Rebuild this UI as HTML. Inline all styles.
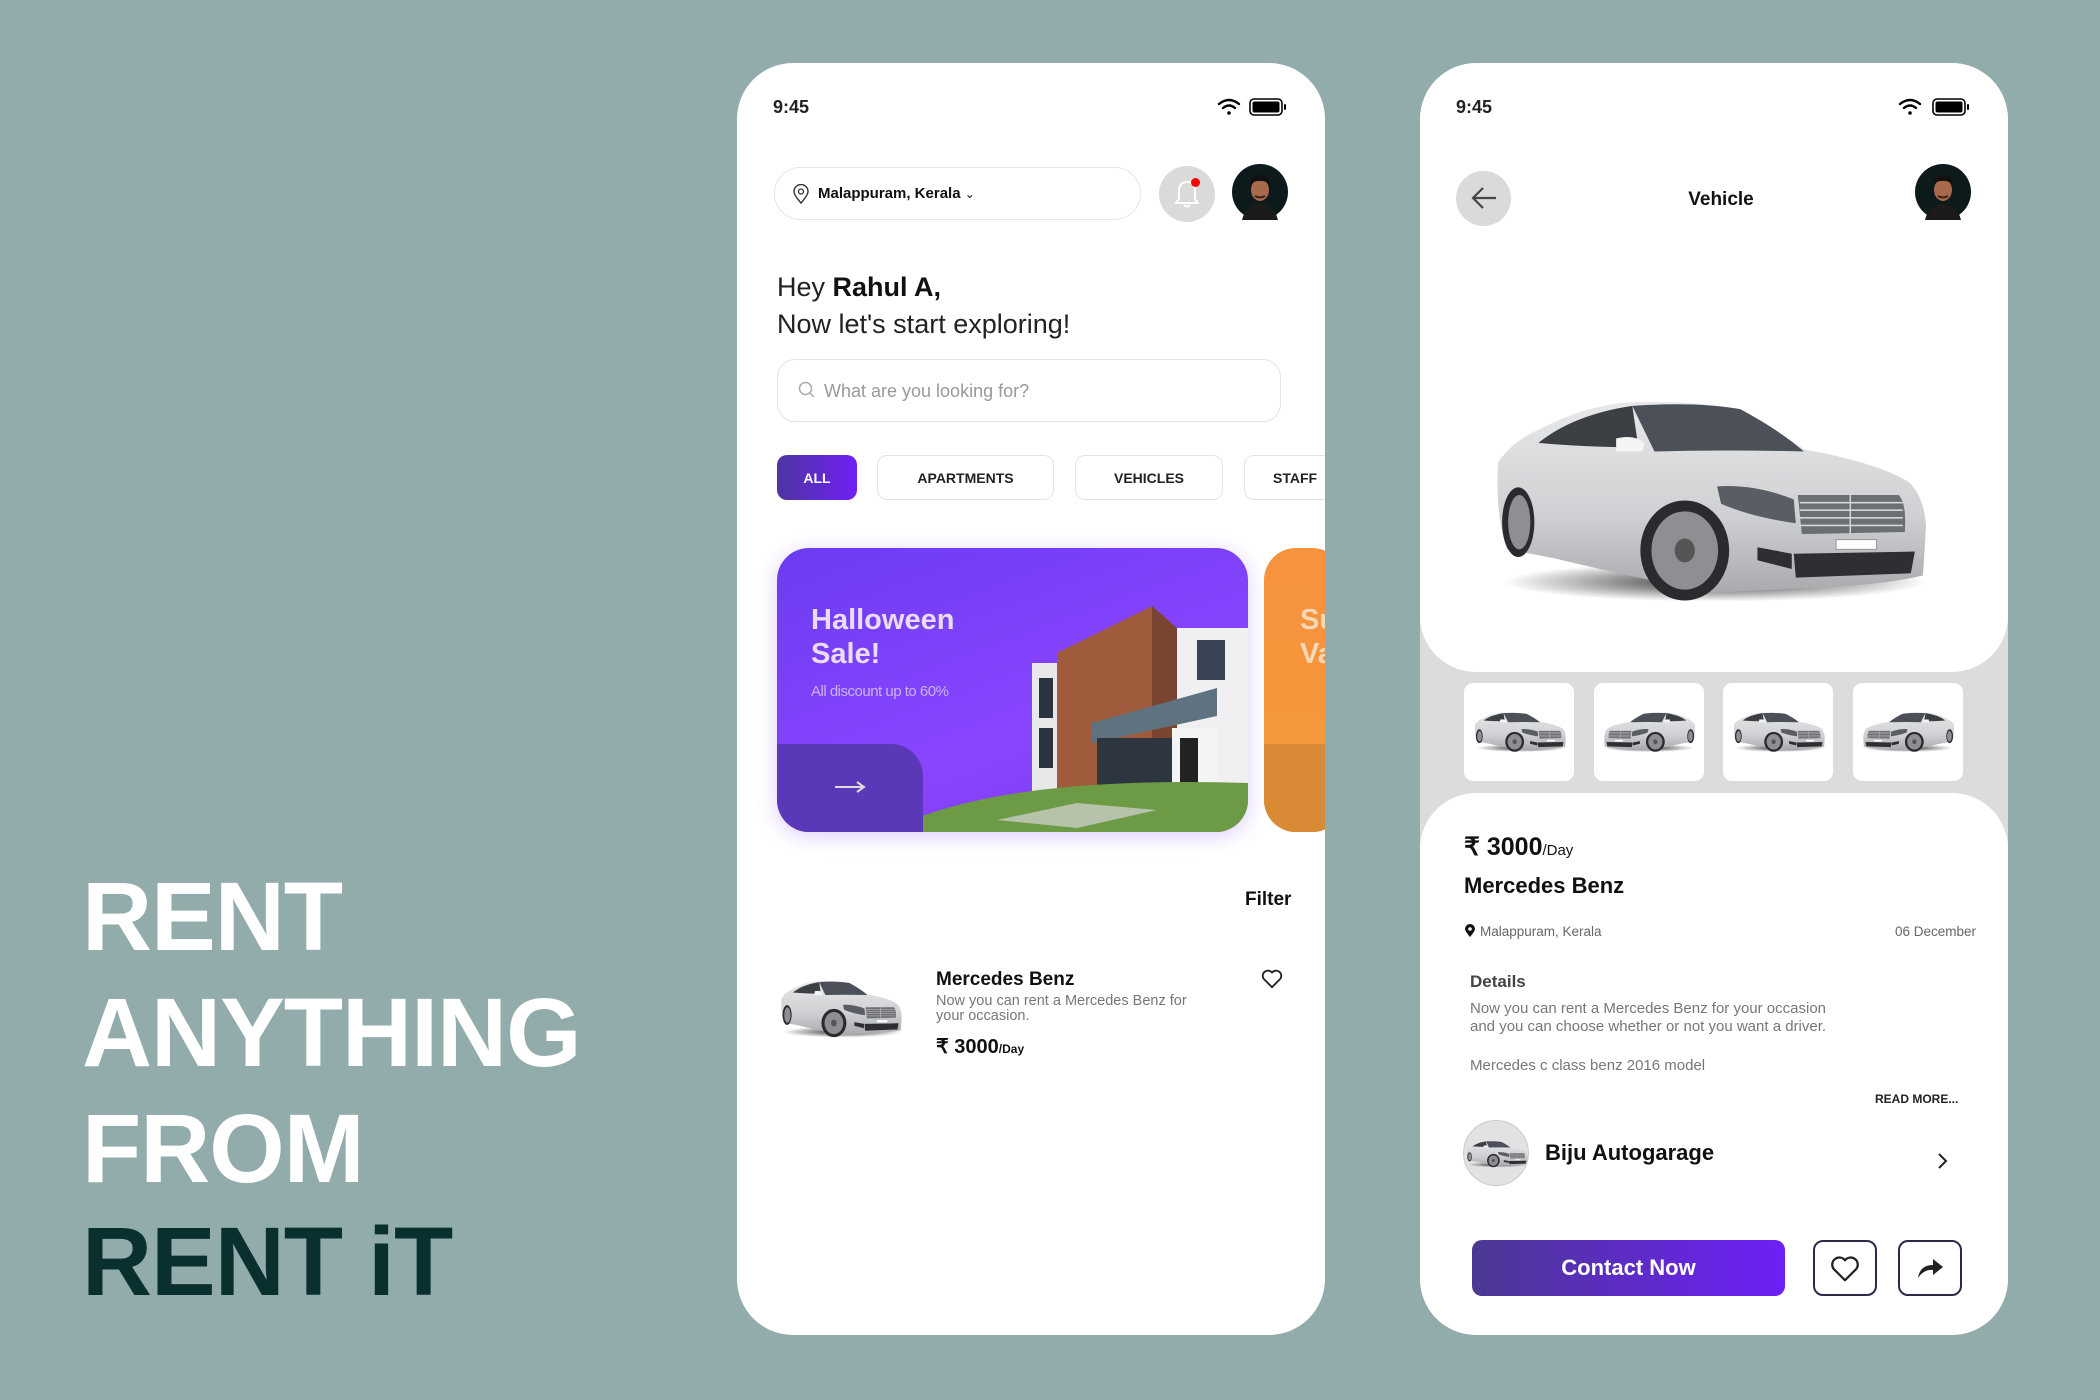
<!DOCTYPE html>
<html><head><meta charset="utf-8">
<style>
*{margin:0;padding:0;box-sizing:border-box}
body{width:2100px;height:1400px;background:#92abab;position:relative;overflow:hidden;font-family:"Liberation Sans",sans-serif}
.abs{position:absolute}
.big{position:absolute;left:82px;font-weight:bold;font-size:97px;letter-spacing:-1px;color:#fff;line-height:1}
.phone{position:absolute;top:63px;width:588px;height:1272px;border-radius:56px;overflow:hidden;background:#fff}
.t{position:absolute;white-space:nowrap}
.chip{position:absolute;top:392px;height:45px;border:1.5px solid #e3e3e3;border-radius:10px;font-size:14px;font-weight:bold;color:#222;display:flex;align-items:center;justify-content:center}
</style></head><body>
<svg width="0" height="0" style="position:absolute">
<defs>
<linearGradient id="cb" x1="0" y1="0" x2="0" y2="1"><stop offset="0" stop-color="#e8e8ea"/><stop offset=".6" stop-color="#cfd0d3"/><stop offset="1" stop-color="#a9aaad"/></linearGradient>
<radialGradient id="sh" cx=".5" cy=".5" r=".5"><stop offset="0" stop-color="#111" stop-opacity=".85"/><stop offset="1" stop-color="#111" stop-opacity="0"/></radialGradient>
<symbol id="car" viewBox="0 0 430 195" preserveAspectRatio="none">
<ellipse cx="220" cy="172" rx="210" ry="18" fill="url(#sh)"/>
<path d="M5 62 Q20 42 45 32 Q90 10 132 7 Q190 4 245 13 Q285 35 308 50 Q380 62 412 80 Q428 95 429 122 L426 166 Q380 176 300 178 L218 182 Q150 170 60 150 L14 142 Q2 110 5 62 Z" fill="url(#cb)"/>
<path d="M45 44 Q80 18 138 10 L144 48 Q90 48 45 44 Z" fill="#3c3f44"/>
<path d="M138 10 Q200 6 245 13 Q285 33 308 52 Q230 50 160 52 Z" fill="#4c5058"/>
<path d="M122 40 Q140 36 150 44 L148 52 L122 52 Z" fill="#f4f4f4"/>
<path d="M222 84 Q260 82 298 96 L300 118 Q255 112 226 100 Z" fill="#5a5d63"/>
<path d="M302 92 L402 92 Q410 100 408 126 L306 128 Z" fill="#6b6e73"/>
<g stroke="#d5d5d5" stroke-width="1.5"><line x1="304" y1="99" x2="406" y2="99"/><line x1="304" y1="106" x2="406" y2="106"/><line x1="304" y1="113" x2="406" y2="113"/><line x1="304" y1="120" x2="406" y2="120"/><line x1="354" y1="92" x2="354" y2="128"/></g>
<rect x="340" y="133" width="40" height="9" fill="#fff" stroke="#999" stroke-width="1"/>
<path d="M298 146 L418 144 L414 164 L300 168 Z" fill="#2e2f33"/>
<path d="M262 140 L296 146 L296 160 L262 152 Z" fill="#2e2f33"/>
<ellipse cx="190" cy="143" rx="44" ry="46" fill="#2a2b2e"/>
<ellipse cx="190" cy="143" rx="33" ry="36" fill="#8d8f93"/>
<ellipse cx="190" cy="143" rx="10" ry="11" fill="#555"/>
<ellipse cx="25" cy="117" rx="16" ry="32" fill="#2a2b2e"/>
<ellipse cx="26" cy="117" rx="11" ry="25" fill="#8d8f93"/>
</symbol>
<symbol id="av" viewBox="0 0 56 56">
<circle cx="28" cy="28" r="28" fill="#0c1a1c"/>
<path d="M10 56 Q14 40 28 40 Q42 40 46 56 Z" fill="#1b1b1b"/>
<ellipse cx="28" cy="26" rx="9" ry="11" fill="#a86a4a"/>
<path d="M18 22 Q18 11 28 11 Q39 11 38 22 Q34 16 28 17 Q22 16 18 22 Z" fill="#111"/>
<path d="M23 32 Q28 35 33 32" stroke="#3a2018" stroke-width="2" fill="none"/>
</symbol>
<symbol id="wifi" viewBox="0 0 24 18">
<path d="M2 6 Q12 -2 22 6" stroke="#000" stroke-width="2.4" fill="none" stroke-linecap="round"/>
<path d="M6 10 Q12 5 18 10" stroke="#000" stroke-width="2.4" fill="none" stroke-linecap="round"/>
<circle cx="12" cy="15" r="1.8" fill="#000"/>
</symbol>
<symbol id="bat" viewBox="0 0 38 18">
<rect x="1" y="1" width="32" height="16" rx="4" fill="none" stroke="#000" stroke-width="1.6"/>
<rect x="3.5" y="3.5" width="27" height="11" rx="2" fill="#000"/>
<rect x="35" y="6" width="2" height="6" rx="1" fill="#000"/>
</symbol>
</defs></svg>

<div class="big" style="top:868px">RENT</div>
<div class="big" style="top:984px">ANYTHING</div>
<div class="big" style="top:1100px">FROM</div>
<div class="big" style="top:1213px;color:#0a2f2f">RENT iT</div>

<!-- PHONE 1 -->
<div class="phone" style="left:737px">
 <div class="t" style="left:36px;top:34px;font-size:18px;font-weight:bold;color:#222">9:45</div>
 <svg class="abs" style="left:480px;top:35px" width="24" height="18"><use href="#wifi"/></svg>
 <svg class="abs" style="left:512px;top:35px" width="38" height="18"><use href="#bat"/></svg>
 <div class="abs" style="left:37px;top:104px;width:367px;height:53px;border:1.5px solid #e6e6e6;border-radius:27px"></div>
 <svg class="abs" style="left:56px;top:121px" width="16" height="20" viewBox="0 0 16 20"><path d="M8 19 Q1 11 1 7.5 A7 7 0 0 1 15 7.5 Q15 11 8 19Z" fill="none" stroke="#333" stroke-width="1.4"/><circle cx="8" cy="7.5" r="2.5" fill="none" stroke="#333" stroke-width="1.3"/></svg>
 <div class="t" style="left:81px;top:122px;font-size:15px;font-weight:bold;color:#111">Malappuram, Kerala <span style="font-weight:normal;font-size:12px">&#8964;</span></div>
 <div class="abs" style="left:422px;top:103px;width:56px;height:56px;border-radius:50%;background:#dadada"></div>
 <svg class="abs" style="left:438px;top:116px" width="24" height="30" viewBox="0 0 24 30"><path d="M12 3 Q4 3 4 13 L4 20 L1 24 L23 24 L20 20 L20 13 Q20 3 12 3Z" fill="none" stroke="#fff" stroke-width="2"/><path d="M9 26 Q12 29 15 26" stroke="#fff" stroke-width="2" fill="none"/></svg>
 <div class="abs" style="left:454px;top:115px;width:9px;height:9px;border-radius:50%;background:#f00"></div>
 <svg class="abs" style="left:495px;top:101px" width="56" height="56"><use href="#av"/></svg>
 <div class="t" style="left:40px;top:209px;font-size:27px;color:#222">Hey <b style="color:#111">Rahul A,</b></div>
 <div class="t" style="left:40px;top:246px;font-size:27px;color:#222">Now let's start exploring!</div>
 <div class="abs" style="left:40px;top:296px;width:504px;height:63px;border:1.5px solid #e3e3e3;border-radius:18px"></div>
 <svg class="abs" style="left:61px;top:318px" width="18" height="18" viewBox="0 0 18 18"><circle cx="7.5" cy="7.5" r="6" fill="none" stroke="#aaa" stroke-width="1.5"/><line x1="12" y1="12" x2="16" y2="16" stroke="#aaa" stroke-width="1.5"/></svg>
 <div class="t" style="left:87px;top:318px;font-size:18px;color:#999">What are you looking for?</div>
 <div class="chip" style="left:40px;width:80px;border:none;color:#fff;background:linear-gradient(90deg,#4e35a0,#7020f5)">ALL</div>
 <div class="chip" style="left:140px;width:177px">APARTMENTS</div>
 <div class="chip" style="left:338px;width:148px">VEHICLES</div>
 <div class="chip" style="left:507px;width:110px;justify-content:flex-start;padding-left:28px">STAFF</div>
 <!-- banner -->
 <div class="abs" style="left:40px;top:485px;width:471px;height:284px;border-radius:32px;overflow:hidden;background:linear-gradient(160deg,#6b3cf0,#8a45ff 60%,#7a3af0);box-shadow:0 4px 20px rgba(120,60,240,.25)">
  <svg class="abs" style="left:0;top:0" width="471" height="284" viewBox="0 0 471 284">
   <rect x="255" y="115" width="50" height="130" fill="#e8e8ea"/>
   <rect x="262" y="130" width="14" height="40" fill="#2a3340"/><rect x="262" y="180" width="14" height="40" fill="#2a3340"/>
   <path d="M280 105 L375 58 L375 250 L280 250 Z" fill="#a05a3c"/>
   <path d="M375 58 L400 80 L400 250 L375 250Z" fill="#7a4530"/>
   <rect x="400" y="80" width="71" height="170" fill="#f0f0f2"/>
   <rect x="420" y="92" width="28" height="40" fill="#3a4455"/>
   <path d="M315 175 L440 140 L440 168 L315 195Z" fill="#5e7280"/>
   <rect x="320" y="190" width="75" height="62" fill="#2c3540"/>
   <rect x="395" y="180" width="45" height="72" fill="#f4f4f4"/>
   <rect x="403" y="190" width="18" height="60" fill="#222"/>
   <path d="M140 270 Q250 228 471 235 L471 284 L130 284Z" fill="#6d9a45"/>
   <path d="M220 272 L300 255 L380 262 L300 280Z" fill="#c9ccc4" opacity=".8"/>
  </svg>
  <div class="abs" style="left:0;top:196px;width:146px;height:90px;background:#5a38b8;border-top-right-radius:32px"></div>
  <svg class="abs" style="left:57px;top:232px" width="32" height="14" viewBox="0 0 32 14"><line x1="1" y1="7" x2="28" y2="7" stroke="#ddd" stroke-width="2"/><path d="M23 2 L30 7 L23 12" fill="none" stroke="#ddd" stroke-width="2"/></svg>
  <div class="t" style="left:34px;top:55px;font-size:29px;font-weight:bold;color:#e9dcf5;line-height:34px">Halloween<br>Sale!</div>
  <div class="t" style="left:34px;top:135px;font-size:15px;color:#c9b3f3;letter-spacing:-.5px">All discount up to 60%</div>
 </div>
 <div class="abs" style="left:527px;top:485px;width:80px;height:284px;border-radius:32px;background:linear-gradient(#f7923e,#f49a3a);overflow:hidden">
  <div class="abs" style="left:0;top:196px;width:80px;height:90px;background:#d88a34"></div>
  <div class="t" style="left:36px;top:55px;font-size:29px;font-weight:bold;color:#f6d8b8;line-height:34px">Su<br>Va</div>
 </div>
 <div class="t" style="left:508px;top:826px;font-size:19px;font-weight:bold;color:#111">Filter</div>
 <svg class="abs" style="left:43px;top:916px" width="122" height="60"><use href="#car"/></svg>
 <div class="t" style="left:199px;top:906px;font-size:19px;font-weight:bold;color:#111">Mercedes Benz</div>
 <div class="t" style="left:199px;top:931px;font-size:14.5px;color:#777;line-height:15px">Now you can rent a Mercedes Benz for<br>your occasion.</div>
 <div class="t" style="left:199px;top:971px;font-size:20px;font-weight:bold;color:#111">₹ 3000<span style="font-size:12px">/Day</span></div>
 <svg class="abs" style="left:524px;top:906px" width="22" height="20" viewBox="0 0 24 22"><path d="M12 20 L3 11 A5 5 0 0 1 12 4 A5 5 0 0 1 21 11 Z" fill="none" stroke="#222" stroke-width="2" stroke-linejoin="round"/></svg>
</div>

<!-- PHONE 2 -->
<div class="phone" style="left:1420px;background:#dcdcdc">
 <div class="abs" style="left:0;top:0;width:588px;height:609px;background:#fff;border-radius:0 0 56px 56px"></div>
 <div class="t" style="left:36px;top:34px;font-size:18px;font-weight:bold;color:#222">9:45</div>
 <svg class="abs" style="left:478px;top:35px" width="24" height="18"><use href="#wifi"/></svg>
 <svg class="abs" style="left:512px;top:35px" width="38" height="18"><use href="#bat"/></svg>
 <div class="abs" style="left:36px;top:108px;width:55px;height:55px;border-radius:50%;background:#dadada"></div>
 <svg class="abs" style="left:50px;top:122px" width="28" height="26" viewBox="0 0 28 26"><line x1="3" y1="13" x2="26" y2="13" stroke="#444" stroke-width="2.2"/><path d="M13 3 L3 13 L13 23" fill="none" stroke="#444" stroke-width="2.2"/></svg>
 <div class="t" style="left:0;width:602px;text-align:center;top:126px;font-size:19px;font-weight:bold;color:#111">Vehicle</div>
 <svg class="abs" style="left:495px;top:101px" width="56" height="56"><use href="#av"/></svg>
 <svg class="abs" style="left:73px;top:332px" width="434" height="212"><use href="#car"/></svg>
 <div class="abs" style="left:44px;top:620px;width:110px;height:98px;background:#fff;border-radius:9px"></div>
 <div class="abs" style="left:174px;top:620px;width:110px;height:98px;background:#fff;border-radius:9px"></div>
 <div class="abs" style="left:303px;top:620px;width:110px;height:98px;background:#fff;border-radius:9px"></div>
 <div class="abs" style="left:433px;top:620px;width:110px;height:98px;background:#fff;border-radius:9px"></div>
 <svg class="abs" style="left:54px;top:648px" width="92" height="42"><use href="#car"/></svg>
 <svg class="abs" style="left:184px;top:648px;transform:scaleX(-1)" width="92" height="42"><use href="#car"/></svg>
 <svg class="abs" style="left:313px;top:648px" width="92" height="42"><use href="#car"/></svg>
 <svg class="abs" style="left:443px;top:648px;transform:scaleX(-1)" width="92" height="42"><use href="#car"/></svg>
 <div class="abs" style="left:0;top:730px;width:588px;height:560px;background:#fff;border-radius:56px 56px 0 0"></div>
 <div class="t" style="left:44px;top:769px;font-size:25px;font-weight:bold;color:#111">₹ 3000<span style="font-size:15px;font-weight:normal">/Day</span></div>
 <div class="t" style="left:44px;top:810px;font-size:22px;font-weight:bold;color:#111">Mercedes Benz</div>
 <svg class="abs" style="left:45px;top:861px" width="10" height="14" viewBox="0 0 10 14"><path d="M5 13 Q0 7 0 5 A5 5 0 0 1 10 5 Q10 7 5 13Z" fill="#111"/><circle cx="5" cy="5" r="1.8" fill="#fff"/></svg>
 <div class="t" style="left:60px;top:861px;font-size:13.5px;color:#666">Malappuram, Kerala</div>
 <div class="t" style="left:475px;top:861px;font-size:13.5px;color:#666">06 December</div>
 <div class="t" style="left:50px;top:909px;font-size:17px;font-weight:bold;color:#444">Details</div>
 <div class="t" style="left:50px;top:937px;font-size:15px;color:#777;line-height:18px">Now you can rent a Mercedes Benz for your occasion<br>and you can choose whether or not you want a driver.</div>
 <div class="t" style="left:50px;top:994px;font-size:15px;color:#777">Mercedes c class benz 2016 model</div>
 <div class="t" style="left:455px;top:1029px;font-size:12px;font-weight:bold;color:#222">READ MORE...</div>
 <div class="abs" style="left:43px;top:1057px;width:66px;height:66px;border-radius:50%;background:#e2e2e2;border:1px solid #ccc;overflow:hidden">
  <svg class="abs" style="left:2px;top:19px" width="62" height="28"><use href="#car"/></svg>
 </div>
 <div class="t" style="left:125px;top:1077px;font-size:22px;font-weight:bold;color:#111">Biju Autogarage</div>
 <svg class="abs" style="left:517px;top:1089px" width="12" height="18" viewBox="0 0 12 18"><path d="M2 2 L9 9 L2 16" fill="none" stroke="#222" stroke-width="2"/></svg>
 <div class="abs" style="left:52px;top:1177px;width:313px;height:56px;border-radius:10px;background:linear-gradient(90deg,#4c3892,#6e1ff8);color:#fff;font-size:22px;font-weight:bold;display:flex;align-items:center;justify-content:center">Contact Now</div>
 <div class="abs" style="left:393px;top:1177px;width:64px;height:56px;border:2px solid #2c2a48;border-radius:10px"></div>
 <svg class="abs" style="left:410px;top:1192px" width="30" height="28" viewBox="0 0 24 22"><path d="M12 20 L3 11 A5 5 0 0 1 12 4 A5 5 0 0 1 21 11 Z" fill="none" stroke="#222" stroke-width="1.8" stroke-linejoin="round"/></svg>
 <div class="abs" style="left:478px;top:1177px;width:64px;height:56px;border:2px solid #2c2a48;border-radius:10px"></div>
 <svg class="abs" style="left:495px;top:1192px" width="30" height="26" viewBox="0 0 30 26"><path d="M3 23 Q5 10 18 10 L18 4 L28 12 L18 20 L18 15 Q9 14 3 23Z" fill="#222"/></svg>
</div>
</body></html>
